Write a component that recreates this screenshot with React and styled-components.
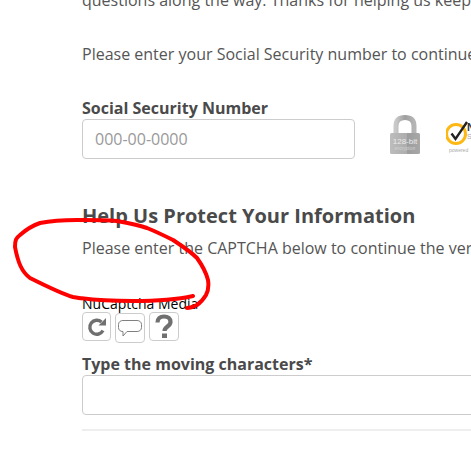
import React from 'react';
import styled, { createGlobalStyle } from 'styled-components';

const Global = createGlobalStyle`
  html, body {
    margin: 0;
    padding: 0;
    background: #fff;
    overflow: hidden;
  }
  body {
    font-family: "Open Sans", sans-serif;
    color: #555;
  }
`;

const Page = styled.div`
  position: relative;
  width: 471px;
  height: 462px;
  overflow: hidden;
`;

const Content = styled.div`
  width: 560px;
  margin-top: -12px;
  padding-left: 82px;
`;

const Para = styled.p`
  margin: 0;
  font-size: 16px;
  line-height: 24px;
  white-space: nowrap;
  margin-bottom: ${(p) => p.$gap || 0}px;
`;

const Label = styled.label`
  display: block;
  font-size: 16px;
  font-weight: 700;
  line-height: 22px;
  color: #4a4a4a;
`;

const SsnRow = styled.div`
  display: flex;
  align-items: flex-start;
  margin-bottom: 44px;
`;

const Input = styled.input`
  display: block;
  box-sizing: border-box;
  width: ${(p) => p.$width}px;
  height: 40px;
  padding: 0 12px;
  border: 1px solid #ccc;
  border-radius: 4px;
  font-family: "Open Sans", sans-serif;
  font-size: 16px;
  color: #555;
  background: #fff;
  &::placeholder {
    color: #999;
    opacity: 1;
  }
`;

const Badges = styled.div`
  display: flex;
  margin-left: 33px;
  margin-top: -4px;
`;

const Norton = styled.div`
  position: relative;
  width: 60px;
  height: 40px;
  margin-left: 24px;
  margin-top: 4px;
`;

const Powered = styled.span`
  position: absolute;
  left: 3px;
  top: 28px;
  font-family: "Liberation Sans", sans-serif;
  font-size: 5px;
  color: #aaa;
`;

const NortonMark = styled.span`
  position: absolute;
  left: 21px;
  top: 2px;
  font-family: "Liberation Sans", sans-serif;
  font-size: 11px;
  font-weight: 700;
  color: #333;
`;

const NortonSub = styled.span`
  position: absolute;
  left: 21px;
  top: 14px;
  font-family: "Liberation Sans", sans-serif;
  font-size: 7px;
  color: #aaa;
`;

const Heading = styled.h2`
  margin: 0 0 7px;
  font-size: 20px;
  font-weight: 700;
  line-height: 26px;
  color: #4a4a4a;
  white-space: nowrap;
`;

const MediaTitle = styled.div`
  margin-top: 35px;
  font-family: "Open Sans", sans-serif;
  font-size: 14px;
  line-height: 17px;
  color: #000;
`;

const Controls = styled.div`
  display: flex;
  align-items: flex-start;
  gap: 4px;
  margin-bottom: 10px;
`;

const IconButton = styled.button`
  display: flex;
  align-items: center;
  justify-content: center;
  box-sizing: border-box;
  width: ${(p) => p.$w}px;
  height: ${(p) => p.$h}px;
  margin-top: ${(p) => p.$top || 0}px;
  padding: 0;
  background: #fff;
  border: 1px solid #ccc;
  border-radius: 4px;
`;

const Rule = styled.hr`
  margin: 14px 0 0;
  border: 0;
  border-top: 2px solid #eee;
`;

const Scribble = styled.svg`
  position: absolute;
  left: 0;
  top: 0;
  pointer-events: none;
`;

const Padlock = () => (
  <svg width="34" height="42" viewBox="0 0 34 42">
    <defs>
      <linearGradient id="lockShackle" x1="0" y1="0" x2="1" y2="0">
        <stop offset="0" stopColor="#c9c9c9" />
        <stop offset="0.5" stopColor="#9f9f9f" />
        <stop offset="1" stopColor="#b5b5b5" />
      </linearGradient>
      <linearGradient id="lockBody" x1="0" y1="0" x2="1" y2="0">
        <stop offset="0" stopColor="#bdbdbd" />
        <stop offset="0.55" stopColor="#adadad" />
        <stop offset="0.56" stopColor="#9c9c9c" />
        <stop offset="1" stopColor="#a8a8a8" />
      </linearGradient>
    </defs>
    <path d="M8 20V11C8 5 11.500 2.500 17 2.500S26 5 26 11v9" fill="none" stroke="url(#lockShackle)" strokeWidth="5" />
    <rect x="2" y="18" width="30" height="21" rx="1.500" fill="url(#lockBody)" />
    <text x="17" y="29" textAnchor="middle" fontFamily="Liberation Sans" fontSize="8" fill="#ececec">128-bit</text>
    <text x="17" y="35" textAnchor="middle" fontFamily="Liberation Sans" fontSize="4.500" fill="#d4d4d4">encryption</text>
  </svg>
);

const App = () => (
  <Page>
    <Global />
    <Content>
      <Para $gap={30}>questions along the way. Thanks for helping us keep your account safe.</Para>
      <Para $gap={31}>Please enter your Social Security number to continue.</Para>
      <Label>Social Security Number</Label>
      <SsnRow>
        <Input $width={273} placeholder="000-00-0000" />
        <Badges>
          <Padlock />
          <Norton>
            <svg width="24" height="28" viewBox="0 0 24 28" style={{ position: 'absolute', left: 0, top: 0 }}>
              <circle cx="10" cy="15" r="9.500" fill="none" stroke="#fdb813" strokeWidth="3" />
              <path d="M5.500 14.500l4 5.500L21 3" fill="none" stroke="#222" strokeWidth="2.400" />
            </svg>
            <NortonMark>N</NortonMark>
            <NortonSub>S</NortonSub>
            <Powered>powered</Powered>
          </Norton>
        </Badges>
      </SsnRow>
      <Heading>Help Us Protect Your Information</Heading>
      <Para>Please enter the CAPTCHA below to continue the verification.</Para>
      <MediaTitle>NuCaptcha Media</MediaTitle>
      <Controls>
        <IconButton $w={29} $h={29}>
          <svg width="22" height="22" viewBox="0 0 22 22">
            <path d="M17 14.500A7 7 0 1 1 15.500 6" fill="none" stroke="#707070" strokeWidth="3.400" />
            <path d="M12.500 9.500h7.500V2z" fill="#707070" />
          </svg>
        </IconButton>
        <IconButton $w={30} $h={30} $top={1}>
          <svg width="26" height="20" viewBox="0 0 26 20">
            <path d="M6 2.500h14c2.500 0 4.500 1.500 4.500 4v3c0 2.500-2 4-4.500 4H10l-4 4.500 0-4.500C3 13.500 1.500 12 1.500 9.500v-3C1.500 4 3.500 2.500 6 2.500z" fill="#fff" stroke="#808080" strokeWidth="1" />
          </svg>
        </IconButton>
        <IconButton $w={30} $h={29}>
          <svg width="20" height="26" viewBox="0 0 20 26">
            <path d="M3.500 8.500C3.500 4.500 6 2.500 10 2.500s6.500 2 6.500 5.500c0 4.500-6 4.500-6 9" fill="none" stroke="#707070" strokeWidth="4.200" />
            <rect x="8" y="19.500" width="5" height="4.500" fill="#707070" />
          </svg>
        </IconButton>
      </Controls>
      <Label>Type the moving characters*</Label>
      <Input $width={478} />
      <Rule />
    </Content>
    <Scribble width="471" height="462" viewBox="0 0 471 462">
      <path
        d="M193 296C175 300 150 301 133 301C110 301 90 300 73 297C62 294 50 288 30 278C22 272 18 263 15 247C15 240 16 238 20 235C28 228 34 225 40 223C55 220 65 220 77 220C90 220 105 220 117 221C128 223 138 225 147 228C157 232 165 236 173 240C182 246 190 251 197 258C202 265 206 272 208 280C209 286 208 291 206 295C203 300 200 303 197 305C193 307 190 308 187 308"
        fill="none"
        stroke="#f00"
        strokeWidth="4"
        strokeLinecap="round"
        strokeLinejoin="round"
      />
    </Scribble>
  </Page>
);

export default App;
